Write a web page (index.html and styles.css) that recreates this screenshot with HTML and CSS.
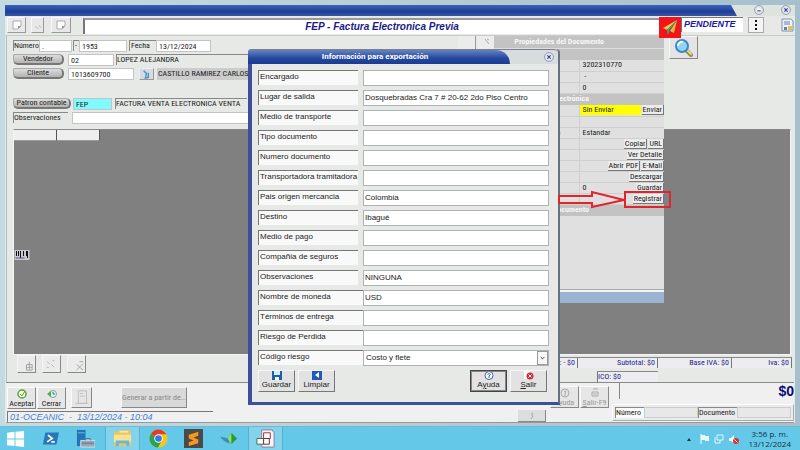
FILE: index.html
```html
<!DOCTYPE html>
<html lang="es">
<head>
<meta charset="utf-8">
<title>FEP - Factura Electronica Previa</title>
<link rel="stylesheet" href="styles.css">
</head>
<body>
<div class="desktop">
  <main class="app">
    <header class="titlebar">
      <div class="titlebar-fill"></div>
      <button class="orb" aria-label="Minimizar"><svg viewBox="0 0 10 10"><path d="M3 6h4" stroke="#555" stroke-width="1.5"/></svg></button>
      <button class="orb" aria-label="Cerrar ventana"><svg viewBox="0 0 10 10"><path d="M3 3l4 4M7 3l-4 4" stroke="#27408f" stroke-width="1.5"/></svg></button>
    </header>

    <div class="toolbar">
      <button class="tool" aria-label="Nuevo"><svg viewBox="0 0 12 12"><path d="M2 2h8v5l-3 3H2z" fill="#fff" stroke="#aaa"/><path d="M10 7H7v3" fill="#999"/></svg></button>
      <button class="tool narrow" aria-label="Editar"><svg viewBox="0 0 12 12"><path d="M3 7l2 2h2M7 6l2 3" fill="none" stroke="#c4c4c4"/></svg></button>
      <button class="tool last" aria-label="Copiar"><svg viewBox="0 0 12 12"><path d="M2 2h8v5l-3 3H2z" fill="#fff" stroke="#aaa"/><path d="M10 7H7v3" fill="#999"/></svg></button>
      <h1 class="doc-title">FEP - Factura Electronica Previa</h1>
      <span class="send-badge"><svg viewBox="0 0 20 20"><path d="M17 3L3 11l4 2z" fill="#f5c74c"/><path d="M17 3L7 13l1 4 2-3z" fill="#5a6b52"/><path d="M17 3l-7 11 4 2z" fill="#e9b63c"/><path d="M17 3L8 13v4" fill="none" stroke="#45b39a"/></svg></span>
      <span class="status">PENDIENTE</span>
      <button class="kebab" aria-label="Más opciones"><i></i><i></i><i></i></button>
      <svg class="calc" viewBox="0 0 14 14"><path d="M2 1h9l2 2v10H2z" fill="#eef2f8" stroke="#7d90b0"/><path d="M4 4h6M4 6h6" stroke="#6a7ea8"/><path d="M4 9h3v3H4z" fill="#6a7ea8"/><path d="M8 8h4v4H8z" fill="#e0c65a"/></svg>
    </div>

    <section class="work">
      <div class="form-area">
        <form class="form">
          <div class="line">
            <label class="sunk w-num" for="num">Número</label><input class="box w-pre" id="num" value=".">
            <span class="sunk dash">-</span><input class="box w-no" aria-label="Consecutivo" value="1953">
            <label class="sunk w-fecha" for="fecha">Fecha</label><input class="box w-date" id="fecha" value="13/12/2024">
          </div>
          <div class="line">
            <button class="pill" type="button">Vendedor</button><input class="box w-vend" aria-label="Vendedor" value="02">
            <span class="sunk grow">LOPEZ ALEJANDRA</span>
          </div>
          <div class="line">
            <button class="pill" type="button">Cliente</button><input class="box w-cli" aria-label="Cliente" value="1013609700">
            <button class="mini" type="button" aria-label="Buscar cliente"><svg viewBox="0 0 14 11"><path d="M4 2l3 3-1 4M9 4v5l-4 1" stroke="#4b91c4" stroke-width="1.5" fill="none"/></svg></button>
            <span class="client">CASTILLO RAMIREZ CARLOS</span>
          </div>
          <div class="line patron">
            <button class="pill wide" type="button">Patron contable</button><input class="box cyan" aria-label="Patron contable" value="FEP">
            <span class="sunk desc">FACTURA VENTA ELECTRONICA VENTA</span>
          </div>
          <div class="line">
            <label class="sunk w-obs" for="obs">Observaciones</label><input class="box grow" id="obs">
          </div>
        </form>
        <div class="side-tools"><span></span><span><svg viewBox="0 0 12 12"><path d="M4 3l4 5M6 3l2 1" stroke="#aaa"/></svg></span></div>
        <button class="search" aria-label="Buscar"><svg viewBox="0 0 22 20"><path d="M13 12l5 5" stroke="#9a8a4a" stroke-width="4" stroke-linecap="round"/><path d="M14 12l4 4" stroke="#e8d98a" stroke-width="2" stroke-linecap="round"/><circle cx="9" cy="8" r="6" fill="#8fd6f5" stroke="#3a87c8" stroke-width="2"/><path d="M5 8a4 4 0 0 1 5-4" stroke="#fff" stroke-width="2" fill="none"/></svg></button>
      </div>

      <div class="grid">
        <div class="grid-head"><span></span><span></span></div>
        <svg class="barcode" viewBox="0 0 15 10"><path d="M0 0h15v10H0z" fill="#c8c8d2"/><path d="M2 1v5M4 1v5M6 1v7M9 1v5M12 1v5M13 1v7" stroke="#111"/><path d="M1 8h9" stroke="#5a5a80"/></svg>
      </div>

      <div class="under">
        <div class="row-tools">
          <button aria-label="Agregar fila"><svg viewBox="0 0 18 18"><path d="M9 9h6v6H9zM9 12h6M12 6v9" fill="none" stroke="#a5a5a5"/></svg></button>
          <button aria-label="Editar fila"><svg viewBox="0 0 18 18"><path d="M4 6l3 2M9 9l3 3M4 12h2M10 5h2" fill="none" stroke="#b5b5b5"/></svg></button>
          <button aria-label="Eliminar fila"><svg viewBox="0 0 18 18"><path d="M9 9l7 6M16 8l-7 7M12 6h4" fill="none" stroke="#a5a5a5"/></svg></button>
        </div>
        <div class="totals">
          <span>Dcto: - $0</span><span>Subtotal: $0</span><span>Base IVA: $0</span><span>Iva: $0</span>
          <span class="ico">ICO: $0</span>
        </div>
      </div>
    </section>

    <footer class="footer">
      <div class="foot-left">
        <div class="actions">
          <button class="act"><svg viewBox="0 0 10 10"><circle cx="5" cy="5" r="4" fill="#fff" stroke="#5aa52c" stroke-width="1.5"/><path d="M3 5l2 2 3-5" stroke="#5aa52c" fill="none"/></svg>Aceptar</button>
          <button class="act"><svg viewBox="0 0 10 10"><circle cx="6" cy="5" r="3.5" fill="#dff1f5" stroke="#6aaea0"/><path d="M0 5l4-3v6z" fill="#4da84a"/><path d="M6 3v2h2" stroke="#477" fill="none"/></svg>Cerrar</button>
          <button class="act off" aria-label="Imprimir" disabled><svg viewBox="0 0 20 20"><path d="M6 2h9v14H6zM8 5h3M8 8h5M3 16h14" fill="none" stroke="#bbb"/></svg></button>
          <button class="generate" disabled>Generar a partir de...</button>
        </div>
        <div class="session">01-OCEANIC&nbsp; - &nbsp;13/12/2024 - 10:04</div>
      </div>
      <div class="foot-mid">
        <div class="actions">
          <button class="act off" disabled><svg viewBox="0 0 10 10"><circle cx="5" cy="5" r="4" fill="none" stroke="#aaa"/><path d="M4 4q2-2 2 0L5 6v2" stroke="#aaa" fill="none"/></svg>Ayuda</button>
          <button class="act off" disabled><svg viewBox="0 0 10 10"><path d="M3 1h5M2 4h6v4H2z" stroke="#aaa" fill="none"/><circle cx="5" cy="6" r="2" fill="#ccc"/></svg><span><u>S</u>alir-F9</span></button>
        </div>
        <button class="page" aria-label="Página"><svg viewBox="0 0 10 10"><path d="M6 2H5v3h1L4 8" stroke="#aaa" fill="none"/></svg></button>
      </div>
      <div class="foot-right">
        <output class="grand">$0</output>
        <div class="refs">
          <label for="rn">Número</label><input id="rn"><label for="rd">Documento</label><input id="rd">
        </div>
      </div>
    </footer>
  </main>

  <aside class="props">
    <table>
      <tbody>
        <tr class="band title"><th colspan="2">Propiedades del Documento</th></tr>
        <tr class="band"><th colspan="2"></th></tr>
        <tr><td></td><td>3202310770</td></tr>
        <tr><td></td><td>&nbsp;-</td></tr>
        <tr><td></td><td>0</td></tr>
        <tr class="band"><th colspan="2">Factura Electrónica</th></tr>
        <tr><td></td><td><div class="cell"><mark>Sin Enviar</mark><button>Enviar</button></div></td></tr>
        <tr><td></td><td></td></tr>
        <tr><td>Presentación</td><td>Estandar</td></tr>
        <tr><td></td><td><div class="cell"><button>Copiar</button><button>URL</button></div></td></tr>
        <tr><td></td><td><div class="cell"><button>Ver Detalle</button></div></td></tr>
        <tr><td></td><td><div class="cell"><button>Abrir PDF</button><button>E-Mail</button></div></td></tr>
        <tr><td></td><td><div class="cell"><button>Descargar</button></div></td></tr>
        <tr><td></td><td><div class="cell"><span>0</span><button>Guardar</button></div></td></tr>
        <tr><td></td><td><div class="cell"><button>Registrar</button></div></td></tr>
        <tr class="band"><th colspan="2">Documento</th></tr>
      </tbody>
    </table>
    <div class="props-blank"></div>
    <div class="props-foot"></div>
  </aside>

  <section class="dialog" role="dialog" aria-labelledby="dlg-title">
    <header class="dlg-head">
      <h2 id="dlg-title">Información para exportación</h2>
      <button class="orb" aria-label="Cerrar diálogo"><svg viewBox="0 0 10 10"><path d="M3 3l4 4M7 3l-4 4" stroke="#27408f" stroke-width="1.5"/></svg></button>
    </header>
    <form class="dlg-body">
      <div class="field"><label for="f1">Encargado</label><input id="f1"></div>
      <div class="field"><label for="f2">Lugar de salida</label><input id="f2" value="Dosquebradas Cra 7 # 20-62 2do Piso Centro"></div>
      <div class="field"><label for="f3">Medio de transporte</label><input id="f3"></div>
      <div class="field"><label for="f4">Tipo documento</label><input id="f4"></div>
      <div class="field"><label for="f5">Numero documento</label><input id="f5"></div>
      <div class="field"><label for="f6">Transportadora tramitadora</label><input id="f6"></div>
      <div class="field"><label for="f7">Pais origen mercancia</label><input id="f7" value="Colombia"></div>
      <div class="field"><label for="f8">Destino</label><input id="f8" value="Ibagué"></div>
      <div class="field"><label for="f9">Medio de pago</label><input id="f9"></div>
      <div class="field"><label for="f10">Compañia de seguros</label><input id="f10"></div>
      <div class="field"><label for="f11">Observaciones</label><input id="f11" value="NINGUNA"></div>
      <div class="field joined"><label for="f12">Nombre de moneda</label><input id="f12" value="USD"></div>
      <div class="field joined"><label for="f13">Términos de entrega</label><input id="f13"></div>
      <div class="field joined"><label for="f14">Riesgo de Perdida</label><input id="f14"></div>
      <div class="field joined"><label for="f15">Código riesgo</label>
        <div class="select"><select id="f15"><option>Costo y flete</option></select><svg viewBox="0 0 10 12"><path d="M3 5l2 2 2-2" fill="none" stroke="#333"/></svg></div>
      </div>
      <div class="dlg-buttons">
        <button type="button"><svg viewBox="0 0 10 9"><path d="M0 0h10v9H0z" fill="#1d5fa8"/><path d="M2 0h6v4H2z" fill="#d8ecf8"/><path d="M3 6h4v3H3z" fill="#fff"/></svg>Guardar</button>
        <button type="button"><svg viewBox="0 0 10 9"><path d="M0 0h10v9H0z" fill="#2457b8"/><path d="M7 1v6L3 4z" fill="#fff"/></svg>Limpiar</button>
        <button type="button" class="focus push"><svg viewBox="0 0 10 9"><circle cx="5" cy="4.5" r="4" fill="#fff" stroke="#3a62a8"/><path d="M3.5 3.500q1.500-2 3 0L5 5v2" stroke="#3a62a8" fill="none"/></svg><span>A<u>y</u>uda</span></button>
        <button type="button"><svg viewBox="0 0 10 9"><path d="M0 0h6v8H0z" fill="#fff"/><circle cx="6" cy="5" r="3.500" fill="#d02c36"/><path d="M4.500 3.500l3 3M7.500 3.500l-3 3" stroke="#fff"/></svg><span><u>S</u>alir</span></button>
      </div>
    </form>
  </section>

  <svg class="arrow" viewBox="0 0 69 19"><path d="M1 6h33V2l32 8-32 7v-4H1z" fill="none" stroke="#e3242b" stroke-width="2"/></svg>
  <div class="highlight"></div>

  <nav class="taskbar">
    <button aria-label="Inicio"><svg viewBox="0 0 20 20"><path d="M1 4l8-1v7H1zM10 3l9-1v8h-9zM1 11h8v7l-8-1zM10 11h9v8l-9-1z" fill="#fff"/></svg></button>
    <button aria-label="PowerShell"><svg viewBox="0 0 20 20"><path d="M4 3h16l-3 14H1z" fill="#2a77b8"/><path d="M7 6l5 4-6 4M11 14h4" fill="none" stroke="#fff" stroke-width="2"/></svg></button>
    <button aria-label="Administrador del servidor"><svg viewBox="0 0 20 20"><path d="M1 1h9v17H1z" fill="#2173ba"/><path d="M2 4h7" stroke="#72bde8"/><path d="M5 12h15v7H5z" fill="#95a7b5" stroke="#d5e0e7"/><path d="M10 12v-2h5v2" fill="none" stroke="#607482"/><path d="M6 15h13" stroke="#607482"/></svg></button>
    <button class="open" aria-label="Explorador"><svg viewBox="0 0 20 20"><path d="M1 3h5V1h12v3h1v14H1z" fill="#e9c55c"/><path d="M1 6h18v8H1z" fill="#f9e294"/><path d="M3 12h14v6h-3v-3H6v3H3z" fill="#66b7dc"/><path d="M7 3h9" stroke="#fff"/></svg></button>
    <button aria-label="Chrome"><svg viewBox="0 0 20 20"><circle cx="10" cy="10" r="9.500" fill="#f8c51b"/><path d="M10 10L1.800 5.200A9.500 9.500 0 0 1 18.200 5.500H10z" fill="#e33b2e"/><path d="M10 10l-8.200-4.800A9.500 9.500 0 0 0 9.500 19.500L13.500 12z" fill="#2ca24c"/><circle cx="10" cy="10" r="4.500" fill="#fff"/><circle cx="10" cy="10" r="3.500" fill="#3478e5"/></svg></button>
    <button aria-label="Sublime Text"><svg viewBox="0 0 20 20"><path d="M0 0h20v20H0z" fill="#4a4a4a"/><path d="M15 3v4l-5 2 5 2v4L5 18v-4l5-2-5-2V6z" fill="#f8981d"/></svg></button>
    <button aria-label="Conexión"><svg viewBox="0 0 20 20"><path d="M1 8l10 2v5q-5 0-10-7z" fill="#3f8fb8"/><path d="M13 4l6 6-6 6-4-6z" fill="#2c9b35"/><path d="M13 4v12l-4-6z" fill="#8fdc7a"/></svg></button>
    <button class="open" aria-label="Aplicación"><svg viewBox="0 0 20 20"><path d="M6 1h11l2 3v15H6z" fill="#f6f4f8" stroke="#8b7ba0"/><path d="M8 4h7v6H8z" fill="#fff" stroke="#a52836"/><path d="M1 10h7v6H1z" fill="#fff" stroke="#3c6b41"/><path d="M8 10h6v6H8z" fill="#fff" stroke="#6c2830"/></svg></button>
    <div class="tray">
      <svg viewBox="0 0 10 10"><path d="M3 7l2-3 2 3z" fill="#163540"/></svg>
      <svg viewBox="0 0 10 10"><path d="M2 0v10" stroke="#fff"/><path d="M2 1h4v1h4v5H6V6H2z" fill="#e8f5fa"/></svg>
      <svg viewBox="0 0 10 10"><path d="M3 1h6v5H3zM1 3v6h5M6 6v3" fill="none" stroke="#e8f5fa"/></svg>
      <svg viewBox="0 0 10 10"><path d="M0 4h2l3-3v8L2 7H0z" fill="#f4fafc"/><circle cx="7" cy="7" r="3" fill="#d8342c"/><path d="M5.500 5.500l3 3" stroke="#fff"/></svg>
      <time datetime="2024-12-13T15:56">3:56 p. m.<br>13/12/2024</time>
    </div>
  </nav>
</div>
</body>
</html>
```

FILE: styles.css
```css
* { box-sizing: border-box; }

body {
  --compact: "Roboto Condensed", Roboto, sans-serif;
  margin: 0;
  font: 8px/10px "Liberation Sans", Arial, sans-serif;
  color: #222;
}

button, input, select {
  font: inherit;
  color: inherit;
  margin: 0;
  padding: 0;
  border: 0;
  border-radius: 0;
  min-width: 0;
}

svg { display: block; }

.desktop {
  position: relative;
  display: flex;
  flex-direction: column;
  height: 100vh;
  background: linear-gradient(90deg, #c5dbe2, #b6cdd6 50%, #a6bfcd);
}

/* Main window */
.app {
  flex: 1;
  display: flex;
  flex-direction: column;
  min-height: 0;
  margin: 5px 5px 3px;
  background: #e6e9e6;
}

.titlebar {
  display: flex;
  gap: 17px;
  height: 11px;
  padding-right: 4px;
  background: #dfe3e0;
}
.titlebar-fill {
  flex: 1;
  background: linear-gradient(#3f63b5, #1b3f9b 60%, #3b559f);
  clip-path: polygon(0 0, calc(100% - 6px) 0, 100% 100%, 0 100%);
}
.orb {
  width: 10px;
  height: 10px;
  border: 1px solid #9aa4b4;
  border-radius: 50%;
  background: radial-gradient(#fff, #c3cbd9);
}

.toolbar {
  display: flex;
  align-items: flex-start;
  height: 20px;
  padding: 1px 1px 0 2px;
  border-bottom: 1px solid #c8cbc8;
}
.tool {
  display: grid;
  place-items: center;
  width: 19px;
  height: 16px;
  margin-right: 5px;
  background: #e8e8e8;
  border: 1px solid #f8f8f8;
  border-right-color: #999;
  border-bottom-color: #999;
}
.tool svg { width: 12px; height: 12px; }
.tool.narrow { width: 13px; margin-right: 7px; }
.tool.last { width: 20px; margin-right: 12px; }
.doc-title {
  flex: 1;
  height: 16px;
  margin: 1px 0 0;
  padding-left: 20px;
  background: #fff;
  border-top: 2px solid #999;
  border-left: 2px solid #777;
  color: #1a1a86;
  font: italic bold 10px/14px "Liberation Sans", Arial, sans-serif;
  text-align: center;
}
.send-badge {
  position: relative;
  z-index: 1;
  width: 22px;
  height: 21px;
  background: #f5131a;
}
.send-badge svg { width: 20px; height: 20px; margin: auto; }
.status {
  width: 62px;
  height: 15px;
  padding-left: 2px;
  background: #fff;
  border-top: 1px solid #777;
  border-left: 1px solid #777;
  color: #1c1ca0;
  font: italic bold 9px/13px "Liberation Sans", Arial, sans-serif;
  white-space: nowrap;
}
.kebab {
  display: flex;
  flex-direction: column;
  align-items: center;
  justify-content: center;
  gap: 2px;
  width: 16px;
  height: 16px;
  margin: 0 16px 0 5px;
  background: #f4f4f4;
  border: 1px solid #aaa;
}
.kebab i { width: 2px; height: 2px; background: #111; }
.calc { width: 14px; height: 14px; margin-top: 1px; }

/* Document form */
.work {
  flex: 1;
  display: flex;
  flex-direction: column;
  min-height: 0;
  margin: 0 1px;
  padding: 0 2px 0 6px;
  border-left: 1px solid #bbb;
}
.form-area {
  display: flex;
  align-items: flex-start;
  height: 93px;
  padding-right: 94px;
}
.form {
  display: flex;
  flex-direction: column;
  gap: 2px;
  width: 440px;
  padding-top: 4px;
  font-family: var(--compact);
}
.side-tools { display: flex; gap: 2px; margin-left: 5px; }
.side-tools span {
  width: 18px;
  height: 14px;
  background: #ececec;
  border-right: 1px solid #999;
}
.side-tools svg { width: 12px; height: 12px; margin: auto; }
.line { display: flex; height: 12px; }
.line.patron { margin-top: 16px; }
.box {
  height: 12px;
  padding: 0 2px;
  background: #fff;
  border: 1px solid #c4c4c4;
}
.sunk {
  height: 11px;
  border-top: 1px solid #888;
  border-left: 1px solid #888;
  white-space: nowrap;
}
.grow { flex: 1; }
.w-num { width: 26px; }
.w-pre { width: 33px; }
.dash { width: 6px; margin-left: 1px; padding-left: 1px; }
.w-no { width: 48px; }
.w-fecha { width: 27px; margin-left: 2px; padding-left: 1px; }
.w-date { width: 55px; }
.w-vend { width: 46px; margin: 0 2px 0 4px; }
.w-cli { width: 66px; margin: 0 5px 0 4px; }
.w-obs { width: 55px; margin-right: 4px; }
.cyan { width: 39px; margin: 0 3px 0 2px; background: #7ffbfd; }
.desc { width: 132px; }
.client { padding-left: 1px; background: #ccc; flex: 1; line-height: 12px; }
.pill {
  width: 51px;
  height: 11px;
  background: linear-gradient(#ddd, #b3b3b3);
  border: 1px solid #aaa;
  border-right: 2px solid #777;
  border-bottom: 2px solid #777;
  border-radius: 2px 5px 5px 5px;
  line-height: 8px;
}
.pill.wide { width: 58px; white-space: nowrap; }
.mini {
  width: 15px;
  margin-right: 3px;
  background: #d4dbe2;
  border: 1px solid #eee;
  border-right-color: #999;
  border-bottom-color: #999;
}
.search {
  display: grid;
  place-items: center;
  width: 29px;
  height: 23px;
  margin-left: auto;
  background: #e4e4e4;
  border: 1px solid #f6f6f6;
  border-right-color: #888;
  border-bottom-color: #888;
}
.search svg { width: 22px; height: 20px; }

.grid {
  flex: 1;
  margin-right: 1px;
  background: #808080;
  border: 1px solid #f5f5f5;
  border-top-color: #888;
}
.grid-head { display: flex; }
.grid-head span {
  width: 43px;
  height: 11px;
  background: #eee;
  border-right: 1px solid #555;
  border-bottom: 1px solid #999;
}
.barcode { width: 16px; height: 10px; margin-top: 109px; }

.under {
  display: flex;
  justify-content: space-between;
  height: 27px;
}
.row-tools { display: flex; gap: 6px; padding-left: 4px; }
.row-tools button {
  width: 19px;
  height: 18px;
  background: #ebebeb;
  border: 1px solid #f4f4f4;
  border-right-color: #888;
  border-bottom-color: #888;
}
.totals {
  display: grid;
  grid-template-columns: 60px 80px 74px 60px;
  row-gap: 2px;
  padding-top: 2px;
  color: #23238f;
  font-family: var(--compact);
  text-align: right;
}
.totals span {
  height: 11px;
  padding-right: 2px;
  background: #ededf0;
  border-top: 1px solid #888;
  border-right: 1px solid #777;
}
.totals .ico {
  grid-column: 2;
  margin-left: 19px;
  border-right: 0;
  border-left: 1px solid #777;
  text-align: left;
}

/* Window footer */
.footer {
  display: flex;
  height: 41px;
  margin: 0 1px;
  background: #f0f0f0;
  border-top: 1px solid #888;
  border-bottom: 1px solid #999;
}
.foot-left { flex: 1; padding: 4px 0 0 1px; }
.actions { display: flex; gap: 1px; }
.act {
  display: flex;
  flex-direction: column;
  align-items: center;
  width: 29px;
  height: 22px;
  padding-top: 1px;
  background: #e6e6e6;
  border: 1px solid #fafafa;
  border-right-color: #888;
  border-bottom-color: #888;
  font-family: var(--compact);
}
.act svg { width: 10px; height: 10px; flex: none; }
.act.off { color: #999; }
.foot-left .off { width: 21px; height: 21px; margin-left: 4px; }
.foot-left .off svg { width: 18px; height: 18px; }
.generate {
  width: 66px;
  height: 21px;
  margin-left: 28px;
  background: #d9d9d9;
  border: 1px solid #f5f5f5;
  border-right-color: #888;
  border-bottom-color: #888;
  color: #888;
  font-family: var(--compact);
  white-space: nowrap;
}
.session {
  width: 206px;
  height: 11px;
  margin-top: 2px;
  padding-left: 2px;
  border-top: 1px solid #777;
  border-left: 1px solid #777;
  color: #3b7fd6;
  font-size: 9px;
  font-style: italic;
}
.foot-mid { padding-top: 3px; margin-right: 3px; display: flex; flex-direction: row-reverse; }
.page {
  display: grid;
  place-items: center;
  align-self: flex-end;
  width: 28px;
  height: 12px;
  margin-right: 4px;
  background: #ddd;
  border-right: 1px solid #888;
  border-bottom: 1px solid #888;
}
.page svg { width: 10px; height: 10px; }
.foot-right { width: 182px; }
.grand {
  display: block;
  height: 16px;
  margin-left: 7px;
  border-left: 1px solid #888;
  color: #0b0b78;
  font: bold 14px/17px "Liberation Sans", Arial, sans-serif;
  text-align: right;
}
.refs {
  display: flex;
  margin-top: 5px;
  padding: 2px;
  background: #ebebeb;
  border: 1px solid #fff;
  border-right-color: #aaa;
  border-bottom-color: #aaa;
  font-family: var(--compact);
}
.refs label {
  height: 11px;
  padding-right: 2px;
  border-top: 1px solid #888;
  border-left: 1px solid #888;
}
.refs input {
  flex: 1;
  height: 11px;
  background: #e8e8e8;
  border: 1px solid #ccc;
}
.refs label:first-child { background: #fafafa; width: 29px; }

/* Properties panel */
.props {
  position: absolute;
  top: 36px;
  right: 136px;
  width: 170px;
  background: #e0e0e0;
  font-family: var(--compact);
}
.props table {
  width: 100%;
  table-layout: fixed;
  border-collapse: collapse;
}
.props tr { height: 11px; }
.props td {
  padding: 0;
  height: 11px;
  border-bottom: 1px solid #cfcfcf;
}
.props td:first-child {
  width: 87px;
  padding-right: 18px;
  text-align: right;
}
.props td:last-child { padding-left: 3px; border-left: 1px solid #cfcfcf; }
.props .band { height: 12px; background: #c3c3c3; }
.props th {
  height: 12px;
  padding: 0 75px 0 0;
  color: #f6f6f6;
  text-align: right;
}
.props .title th { padding: 0 60px 0 0; border-bottom: 1px solid #ddd; white-space: nowrap; }
.cell { display: flex; justify-content: flex-end; gap: 1px; margin-left: -3px; height: 10px; }
.cell mark, .cell span { flex: 1; padding-left: 3px; background: #ff0; color: inherit; }
.cell span { background: none; }
.cell button {
  background: #ececec;
  border-right: 1px solid #777;
  border-bottom: 1px solid #777;
  padding: 0 1px;
  line-height: 9px;
}
.props-blank { height: 74px; border-bottom: 1px solid #aaa; }
.props-foot { height: 13px; background: #9ab4d2; border-top: 2px solid #f4f4f4; }

/* Export dialog */
.dialog {
  position: absolute;
  top: 49px;
  left: 248px;
  right: 240px;
  background: #e6e9e6;
  border: 4px solid #3c4f9b;
  border-top: 0;
  border-right: 2px solid #657080;
  border-bottom-width: 3px;
  border-radius: 4px 4px 0 0;
}
.dlg-head {
  display: flex;
  align-items: center;
  justify-content: space-between;
  height: 15px;
  margin-left: -4px;
  padding-right: 4px;
  background: #d7dcdf;
  border-top: 1px solid #777f91;
  border-radius: 4px 4px 0 0;
}
.dlg-head h2 {
  width: 262px;
  height: 14px;
  margin: 0;
  padding-right: 8px;
  background: linear-gradient(#6683be, #2348a0 60%, #1c3b91);
  border-radius: 3px 14px 0 0;
  color: #fff;
  font: bold 8px/14px Roboto, sans-serif;
  text-align: center;
}
.dlg-body {
  display: flex;
  flex-direction: column;
  gap: 4px;
  padding: 6px 9px 10px 6px;
}
.field { display: flex; gap: 5px; height: 16px; }
.field label {
  width: 100px;
  height: 15px;
  padding-left: 1px;
  background: #f9f9f9;
  border-top: 1px solid #777;
  border-left: 1px solid #777;
  line-height: 12px;
  white-space: nowrap;
}
.field input, .select {
  flex: 1;
  height: 16px;
  padding-left: 1px;
  background: #fff;
  border: 1px solid #aeb2b2;
}
.field input { padding-bottom: 2px; }
.joined { gap: 0; }
.joined label { width: 105px; }
.select { position: relative; }
.select select {
  width: 100%;
  height: 14px;
  padding-left: 1px;
  appearance: none;
  background: none;
}
.select svg {
  position: absolute;
  top: 0;
  right: 0;
  width: 11px;
  height: 14px;
  background: #f6f6f6;
  border: 1px solid #999;
  pointer-events: none;
}
.dlg-buttons { display: flex; gap: 3px; padding-right: 2px; }
.dlg-buttons button {
  display: flex;
  flex-direction: column;
  align-items: center;
  width: 37px;
  height: 22px;
  background: #e2e2e2;
  border: 1px solid #f6f6f6;
  border-right-color: #777;
  border-bottom-color: #777;
}
.dlg-buttons svg { width: 10px; height: 9px; flex: none; }
.dlg-buttons .push { margin-left: auto; }
.dlg-buttons .focus { border: 1px solid #444; outline: 1px solid #888; outline-offset: -2px; }

/* Callout pointing at the register button */
.arrow {
  position: absolute;
  top: 190px;
  right: 173px;
  width: 69px;
  height: 19px;
}
.highlight {
  position: absolute;
  top: 191px;
  right: 129px;
  width: 47px;
  height: 17px;
  border: 2px solid #df262d;
}

/* Taskbar */
.taskbar {
  display: flex;
  height: 24px;
  background: #64c8e8;
  border-top: 1px solid #7fb3c6;
}
.taskbar button {
  display: grid;
  place-items: center;
  width: 31px;
  background: none;
  margin-right: 4px;
}
.taskbar button svg { width: 19px; height: 19px; }
.taskbar button.open {
  width: 35px;
  margin-right: 3px;
  background: #84d3ec;
  border: 1px solid #55b0cc;
  border-width: 0 1px;
}
.taskbar button:nth-child(2) svg { width: 17px; height: 17px; }
.tray {
  display: flex;
  align-items: center;
  gap: 5px;
  margin-left: auto;
  padding-right: 9px;
  color: #12303a;
}
.tray svg { width: 10px; height: 10px; }
.tray time { margin-left: 5px; text-align: center; font-family: "Open Sans", sans-serif; }
```
